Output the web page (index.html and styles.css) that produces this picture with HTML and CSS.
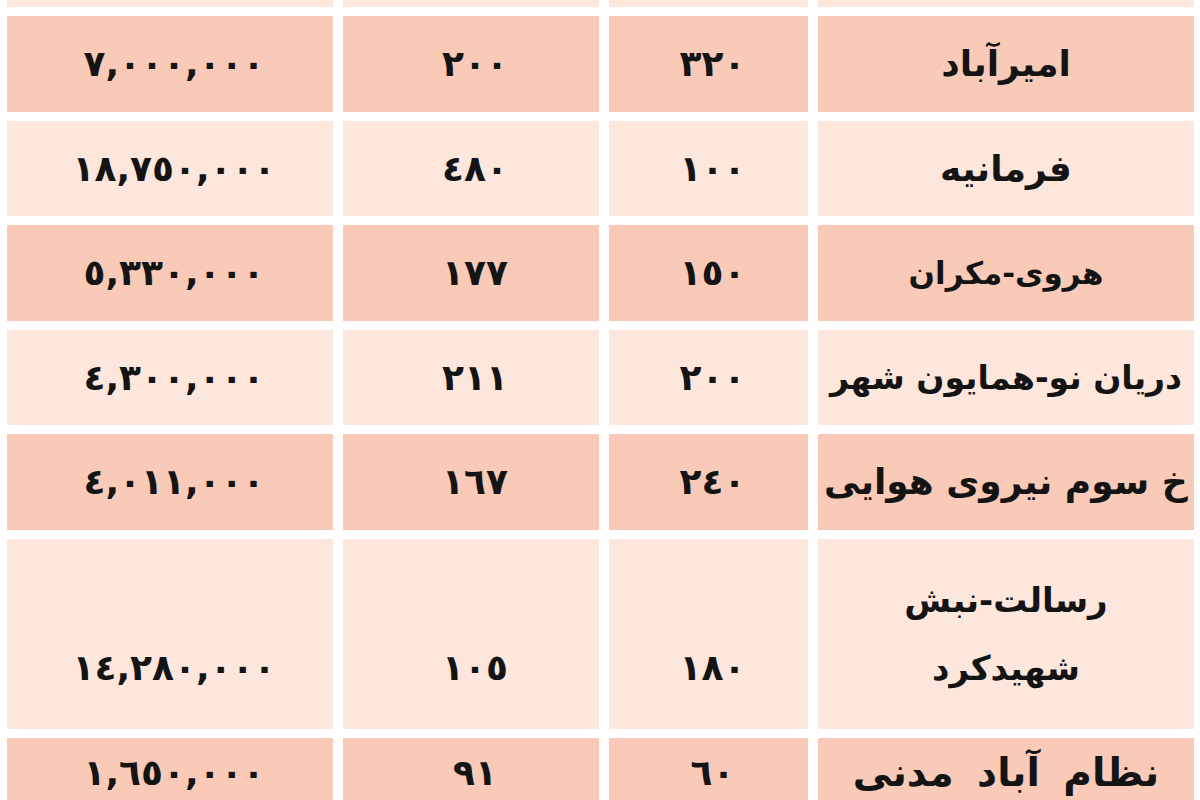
FILE: index.html
```html
<!DOCTYPE html>
<html lang="fa" dir="rtl">
<head>
<meta charset="utf-8">
<title>جدول</title>
<link rel="stylesheet" href="styles.css">
</head>
<body>
<div class="table">
  <div class="cell stub light"></div><div class="cell stub light"></div><div class="cell stub light"></div><div class="cell stub light"></div>

  <div class="cell dark name">امیرآباد</div>
  <div class="cell dark num"><span>٣٢٠</span></div>
  <div class="cell dark num"><span>٢٠٠</span></div>
  <div class="cell dark num"><span>٧,٠٠٠,٠٠٠</span></div>

  <div class="cell light name">فرمانیه</div>
  <div class="cell light num"><span>١٠٠</span></div>
  <div class="cell light num"><span>٤٨٠</span></div>
  <div class="cell light num"><span>١٨,٧٥٠,٠٠٠</span></div>

  <div class="cell dark name compact">هروی-مکران</div>
  <div class="cell dark num"><span>١٥٠</span></div>
  <div class="cell dark num"><span>١٧٧</span></div>
  <div class="cell dark num"><span>٥,٣٣٠,٠٠٠</span></div>

  <div class="cell light name medium">دریان نو-همایون شهر</div>
  <div class="cell light num"><span>٢٠٠</span></div>
  <div class="cell light num"><span>٢١١</span></div>
  <div class="cell light num"><span>٤,٣٠٠,٠٠٠</span></div>

  <div class="cell dark name overflow">خ سوم نیروی هوایی</div>
  <div class="cell dark num"><span>٢٤٠</span></div>
  <div class="cell dark num"><span>١٦٧</span></div>
  <div class="cell dark num"><span>٤,٠١١,٠٠٠</span></div>

  <div class="cell light name tall">رسالت-نبش<br>شهیدکرد</div>
  <div class="cell light num low"><span>١٨٠</span></div>
  <div class="cell light num low"><span>١٠٥</span></div>
  <div class="cell light num low"><span>١٤,٢٨٠,٠٠٠</span></div>

  <div class="cell dark name last spaced">نظام آباد مدنی</div>
  <div class="cell dark num last"><span>٦٠</span></div>
  <div class="cell dark num last"><span>٩١</span></div>
  <div class="cell dark num last"><span>١,٦٥٠,٠٠٠</span></div>
</div>
</body>
</html>
```

FILE: styles.css
```css
html, body {
  margin: 0;
  padding: 0;
  background: #ffffff;
  height: 800px;
  overflow: hidden;
}

.table {
  display: grid;
  direction: rtl;
  grid-template-columns: 376px 199px 256px 326px;
  grid-template-rows: 7px repeat(5, 95.5px) 190px 95.5px;
  column-gap: 10px;
  row-gap: 9px;
  padding: 0 6px 0 7px;
  font-family: "DejaVu Sans", sans-serif;
  font-weight: bold;
  color: #141414;
}

.cell {
  display: flex;
  align-items: center;
  justify-content: center;
  overflow: hidden;
  white-space: nowrap;
}

.dark { background: #f9cab8; }
.light { background: #fde6dc; }

.num span {
  direction: ltr;
  unicode-bidi: isolate;
  font-size: 36px;
  letter-spacing: 8px;
  margin-right: -8px;
}

.name {
  font-size: 36px;
  text-align: center;
}

.compact { font-size: 31px; }
.medium { font-size: 33px; }
.spaced { font-size: 39px; word-spacing: 10px; }

.overflow {
  justify-content: flex-end;
  padding-left: 6px;
}

.tall {
  white-space: normal;
  line-height: 68px;
  font-size: 34px;
}

.low {
  padding-top: 68px;
}

.last {
  padding-bottom: 26px;
}
```
